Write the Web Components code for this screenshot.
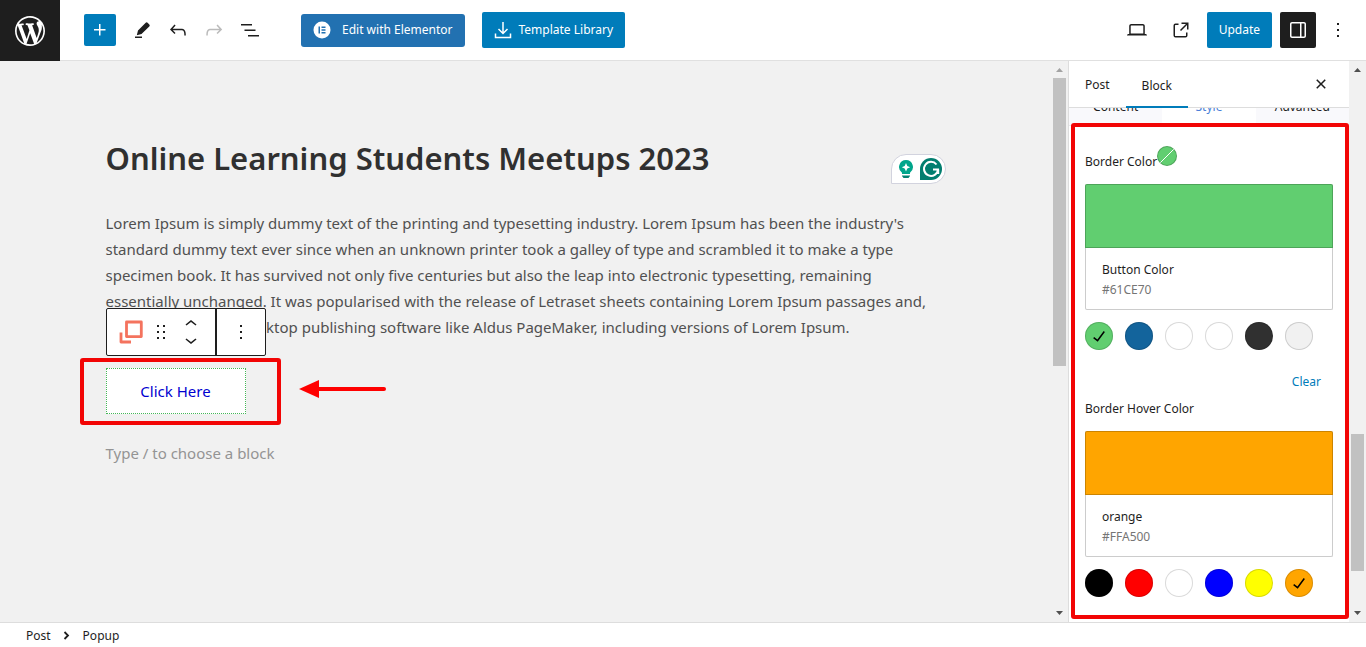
<!DOCTYPE html>
<html lang="en">
<head>
<meta charset="utf-8">
<title>Edit Post</title>
<style>
  html, body {
    margin: 0;
    height: 100%;
  }
  body {
    font-family: "Noto Sans", "Open Sans", sans-serif;
    font-size: 12px;
    line-height: 20px;
    color: #1e1e1e;
    background: #fff;
    --blue: #007cba;
    --line: #ddd;
  }
</style>
</head>
<body>
<post-editor>
  <editor-header slot="header"></editor-header>
  <editor-canvas slot="canvas">
    <span slot="title">Online Learning Students Meetups 2023</span>
    <span slot="text">Lorem Ipsum is simply dummy text of the printing and typesetting industry. Lorem Ipsum has been the industry's<br>standard dummy text ever since when an unknown printer took a galley of type and scrambled it to make a type<br>specimen book. It has survived not only five centuries but also the leap into electronic typesetting, remaining<br>essentially unchanged. It was popularised with the release of Letraset sheets containing Lorem Ipsum passages and,<br>more recently with desktop publishing software like Aldus PageMaker, including versions of Lorem Ipsum.</span>
    <popup-block slot="block">Click Here</popup-block>
  </editor-canvas>
  <settings-sidebar slot="sidebar">
    <color-field label="Border Color" name="Button Color" value="#61CE70" indicator
      colors="#61ce70 #13649c #ffffff #ffffff #303030 #f1f1f1"></color-field>
    <color-field label="Border Hover Color" name="orange" value="#FFA500"
      colors="#000000 #ff0000 #ffffff #0000ff #ffff00 #ffa500"></color-field>
  </settings-sidebar>
  <block-breadcrumb slot="footer"></block-breadcrumb>
</post-editor>

<script>
const icons = {
  wordpress: ['-2 -2 24 24', '<path d="M20 10c0-5.51-4.49-10-10-10C4.48 0 0 4.49 0 10c0 5.52 4.48 10 10 10 5.51 0 10-4.48 10-10zM7.78 15.37L4.37 6.22c.55-.02 1.17-.08 1.17-.08.5-.06.44-1.13-.06-1.11 0 0-1.45.11-2.37.11-.18 0-.37 0-.58-.01C4.12 2.69 6.87 1.11 10 1.11c2.33 0 4.45.87 6.05 2.34-.68-.11-1.65.39-1.65 1.58 0 .74.45 1.36.9 2.1.35.61.55 1.36.55 2.46 0 1.49-1.4 5-1.4 5l-3.03-8.37c.54-.02.82-.17.82-.17.5-.05.44-1.25-.06-1.22 0 0-1.44.12-2.38.12-.87 0-2.33-.12-2.33-.12-.5-.03-.56 1.2-.06 1.22l.92.08 1.26 3.41zM17.41 10c.24-.64.74-1.87.43-4.25.7 1.29 1.05 2.71 1.05 4.25 0 3.29-1.73 6.24-4.4 7.78.97-2.59 1.94-5.2 2.92-7.78zM6.1 18.09C3.12 16.65 1.11 13.53 1.11 10c0-1.3.23-2.48.72-3.59C3.25 10.3 4.67 14.2 6.1 18.09zm4.03-6.63l2.58 6.98c-.86.29-1.76.45-2.71.45-.79 0-1.57-.11-2.29-.33.81-2.38 1.62-4.74 2.42-7.1z"/>'],
  plus: ['0 0 24 24', '<path d="M11 12.5V17.5H12.5V12.5H17.5V11H12.5V6H11V11H6V12.5H11Z"/>'],
  pencil: ['0 0 24 24', '<path d="M19.3 6.5 17.6 4.8a1.3 1.3 0 0 0-1.9 0L8 12.5l-1.2 4.7 4.7-1.2 7.8-7.6a1.3 1.3 0 0 0 0-1.9ZM12 18.5H5V20h7v-1.5Z"/>'],
  undo: ['0 0 24 24', '<path d="M18.3 11.7c-.6-.6-1.4-.9-2.3-.9H6.7l2.9-3.3-1.1-1-4.5 5L8.5 16l1-1-2.7-2.7H16c.5 0 .9.2 1.3.5 1 1 1 3.4 1 4.5v.3h1.5v-.2c0-1.5 0-4.3-1.5-5.7z"/>'],
  redo: ['0 0 24 24', '<path d="M15.6 6.5l-1.1 1 2.9 3.3H8c-.9 0-1.7.3-2.3.9-1.4 1.5-1.4 4.2-1.4 5.6v.2h1.5v-.3c0-1.1 0-3.5 1-4.5.3-.3.7-.5 1.3-.5h9.2L14.5 15l1.1 1.1 4.6-4.6-4.6-5z"/>'],
  list: ['0 0 24 24', '<path d="M3 6h11v1.5H3V6Zm3.5 5.5h11V13h-11v-1.5ZM21 17H10v1.5h11V17Z"/>'],
  laptop: ['0 0 24 24', '<path d="M20.5 16h-.7V8c0-1.1-.9-2-2-2H6.2c-1.1 0-2 .9-2 2v8h-.7c-.8 0-1.5.7-1.5 1.5h20c0-.8-.7-1.5-1.5-1.5zM5.7 8c0-.3.2-.5.5-.5h11.6c.3 0 .5.2.5.5v7.6H5.7V8z"/>'],
  external: ['0 0 24 24', '<path d="M19.5 4.5h-7V6h4.44l-5.97 5.97 1.06 1.06L18 7.06v4.44h1.5v-7Zm-13 1a2 2 0 0 0-2 2v10a2 2 0 0 0 2 2h10a2 2 0 0 0 2-2v-3H17v3a.5.5 0 0 1-.5.5h-10a.5.5 0 0 1-.5-.5v-10a.5.5 0 0 1 .5-.5h3V5.5h-3Z"/>'],
  drawer: ['0 0 24 24', '<path d="M18 4H6c-1.1 0-2 .9-2 2v12c0 1.1.9 2 2 2h12c1.1 0 2-.9 2-2V6c0-1.1-.9-2-2-2zm-4 14.5H6c-.3 0-.5-.2-.5-.5V6c0-.3.2-.5.5-.5h8v13zm4.5-.5c0 .3-.2.5-.5.5h-2.5v-13H18c.3 0 .5.2.5.5v12z"/>'],
  more: ['0 0 24 24', '<path d="M13 19h-2v-2h2v2zm0-6h-2v-2h2v2zm0-6h-2V5h2v2z"/>'],
  drag: ['0 0 24 24', '<path d="M8 7h2V5H8v2zm0 6h2v-2H8v2zm0 6h2v-2H8v2zm6-14v2h2V5h-2zm0 8h2v-2h-2v2zm0 6h2v-2h-2v2z"/>'],
  up: ['0 0 24 24', '<path d="M6.5 12.4L12 8l5.5 4.4-.9 1.2L12 10l-4.5 3.6-1-1.2z"/>'],
  down: ['0 0 24 24', '<path d="M17.5 11.6L12 16l-5.5-4.4.9-1.2L12 14l4.5-3.6 1 1.2z"/>'],
  right: ['0 0 24 24', '<path d="M9.5 8l3.5 3.5L9.5 15" fill="none" stroke="currentColor" stroke-width="1.8"/>'],
  close: ['0 0 24 24', '<path d="M12 13.06l3.712 3.713 1.061-1.06L13.061 12l3.712-3.712-1.06-1.06L12 10.938 8.288 7.227l-1.061 1.06L10.939 12l-3.712 3.712 1.06 1.061L12 13.061z"/>'],
  check: ['0 0 24 24', '<path d="M16.7 7.1l-6.3 8.5-3.3-2.5-.9 1.2 4.5 3.4L17.9 8z"/>'],
  elementor: ['0 0 18 18', '<circle cx="9" cy="9" r="8.5"/><path d="M5.5 5.5h1.5v7H5.5zM8.5 5.5h4V7h-4zM8.5 8.3h4v1.4h-4zM8.5 11h4v1.5h-4z" fill="#2271b1"/>'],
  download: ['0 0 18 18', '<path d="M9 1v11M4.5 8 9 12.5 13.5 8M1.5 12.5v4h15v-4" fill="none" stroke="currentColor" stroke-width="1.5"/>'],
  popup: ['0 0 24 24', '<path d="M7.5 2h14.8v14.6H7.5zM2 12.5V22h10" fill="none" stroke="#f4735e" stroke-width="2.8" stroke-linejoin="round"/>'],
  bulb: ['0 0 16 20', '<path d="M8 1a7 7 0 0 1 4 12.7V15H4v-1.3A7 7 0 0 1 8 1z" fill="#00a58b"/><path d="M8 4 9.3 6.9 12.2 8.2 9.3 9.5 8 12.4 6.7 9.5 3.8 8.2 6.7 6.9z" fill="#fff"/><path d="M4 16.5h8v.5l-1.5 2h-5L4 17z" fill="#028070"/>'],
  grammarly: ['0 0 22 22', '<path d="M0 11a11 11 0 1 1 11 11H0z" fill="#027e6f"/><path d="M16.5 6.5a7 7 0 1 0 1.5 5h-5m5.2 0v4.5" fill="none" stroke="#fff" stroke-width="2"/>'],
};

class UiIcon extends HTMLElement {
  constructor() {
    super();
    this.attachShadow({ mode: 'open' });
    const [viewBox, body] = icons[this.getAttribute('name')];
    this.shadowRoot.innerHTML = `
      <style>
        :host { display: block; flex: none; width: 24px; height: 24px; }
        svg { display: block; width: 100%; height: 100%; fill: currentColor; }
      </style>
      <svg viewBox="${viewBox}" aria-hidden="true">${body}</svg>
    `;
  }
}

class ScrollTrack extends HTMLElement {
  constructor() {
    super();
    this.attachShadow({ mode: 'open' });
    const [before, size, after] = this.getAttribute('parts').split(' ');
    this.shadowRoot.innerHTML = `
      <style>
        :host { display: flex; flex-direction: column; flex: none; width: 17px; background: #f1f1f1; }
        svg { display: block; flex: none; width: 17px; height: 17px; fill: #505050; }
        :host([top]) svg:first-of-type { fill: #a3a3a3; }
        .thumb { flex: ${size} 0 0; margin: 0 2px; background: #c1c1c1; }
      </style>
      <svg viewBox="0 0 17 17"><path d="M5 11h7L8.5 7z"/></svg>
      <div style="flex: ${before} 0 0"></div>
      <div class="thumb"></div>
      <div style="flex: ${after} 0 0"></div>
      <svg viewBox="0 0 17 17"><path d="M5 6h7L8.5 10z"/></svg>
    `;
  }
}

class MarkerBox extends HTMLElement {
  constructor() {
    super();
    this.attachShadow({ mode: 'open' });
    this.shadowRoot.innerHTML = `
      <style>
        :host {
          position: absolute;
          box-sizing: border-box;
          border: 4px solid #f20505;
          border-radius: 3px;
          pointer-events: none;
        }
      </style>
    `;
  }
}

class PostEditor extends HTMLElement {
  constructor() {
    super();
    this.attachShadow({ mode: 'open' });
    this.shadowRoot.innerHTML = `
      <style>
        :host { display: flex; flex-direction: column; height: 100vh; overflow: hidden; }
        main { display: flex; flex: 1; min-height: 0; }
      </style>
      <slot name="header"></slot>
      <main>
        <slot name="canvas"></slot>
        <slot name="sidebar"></slot>
      </main>
      <slot name="footer"></slot>
    `;
  }
}

class EditorHeader extends HTMLElement {
  constructor() {
    super();
    this.attachShadow({ mode: 'open' });
    this.shadowRoot.innerHTML = `
      <style>
        :host {
          display: flex;
          align-items: center;
          flex: none;
          height: 60px;
          border-bottom: 1px solid #e0e0e0;
        }
        button, a {
          display: flex;
          align-items: center;
          justify-content: center;
          padding: 0;
          border: 0;
          border-radius: 2px;
          background: none;
          font: inherit;
          color: inherit;
          text-decoration: none;
          white-space: nowrap;
        }
        .logo {
          width: 60px;
          height: 61px;
          margin-bottom: -1px;
          border-radius: 0;
          background: #1e1e1e;
          color: #fff;
        }
        .logo ui-icon { width: 36px; height: 36px; }
        .tools { display: flex; align-items: center; gap: 12px; margin-left: 24px; }
        .add { width: 32px; height: 32px; margin-right: 2px; background: var(--blue); color: #fff; }
        .off { color: #bbb; }
        .elementor, .library { color: #fff; }
        .elementor {
          gap: 11px;
          height: 33px;
          margin-left: 39px;
          padding: 0 12px;
          border-radius: 3px;
          background: #2271b1;
        }
        .library { gap: 7px; height: 36px; margin-left: 17px; padding: 0 12px; background: var(--blue); }
        .elementor ui-icon, .library ui-icon { width: 18px; height: 18px; }
        .actions { display: flex; align-items: center; gap: 8px; margin-left: auto; padding-right: 16px; }
        .actions .view { margin-right: 12px; }
        .actions .external { margin-right: 6px; }
        .update { height: 36px; padding: 0 12px; background: var(--blue); color: #fff; }
        .settings { width: 36px; height: 36px; margin-right: 2px; background: #1e1e1e; color: #fff; }
      </style>
      <a class="logo" href="#" aria-label="View Posts"><ui-icon name="wordpress"></ui-icon></a>
      <div class="tools">
        <button class="add" aria-label="Add block"><ui-icon name="plus"></ui-icon></button>
        <button aria-label="Tools"><ui-icon name="pencil"></ui-icon></button>
        <button aria-label="Undo"><ui-icon name="undo"></ui-icon></button>
        <button class="off" aria-label="Redo"><ui-icon name="redo"></ui-icon></button>
        <button aria-label="List view"><ui-icon name="list"></ui-icon></button>
      </div>
      <button class="elementor"><ui-icon name="elementor"></ui-icon>Edit with Elementor</button>
      <button class="library"><ui-icon name="download"></ui-icon>Template Library</button>
      <div class="actions">
        <button class="view" aria-label="Preview"><ui-icon name="laptop"></ui-icon></button>
        <a class="external" href="#" aria-label="View Post"><ui-icon name="external"></ui-icon></a>
        <button class="update">Update</button>
        <button class="settings" aria-label="Settings"><ui-icon name="drawer"></ui-icon></button>
        <button aria-label="Options"><ui-icon name="more"></ui-icon></button>
      </div>
    `;
  }
}

class EditorCanvas extends HTMLElement {
  constructor() {
    super();
    this.attachShadow({ mode: 'open' });
    this.shadowRoot.innerHTML = `
      <style>
        :host {
          display: flex;
          flex: 1;
          min-width: 0;
          background: #f1f1f1;
          font-family: "Noto Sans", "Open Sans", sans-serif;
          font-size: 15px;
          line-height: 26px;
          color: #505050;
        }
        .page { flex: 1; min-width: 0; overflow: hidden; }
        article { position: relative; max-width: 840px; margin: 0 auto; padding-top: 77px; }
        h1 { margin: 0; font-size: 31px; font-weight: 600; line-height: 40px; color: #303030; }
        p { margin: 32px 0 28px; white-space: nowrap; }
        .hint { margin: 26px 0 0; color: #949494; }
        .badge {
          position: absolute;
          top: 93px;
          right: 0;
          display: flex;
          align-items: center;
          gap: 6px;
          box-sizing: border-box;
          height: 30px;
          padding: 0 3px 0 6px;
          border: 1px solid #d2d3de;
          border-radius: 15px 15px 15px 0;
          background: #fff;
        }
        .badge ui-icon { width: 22px; height: 22px; }
        .badge ui-icon:first-child { width: 16px; height: 20px; }
      </style>
      <div class="page">
        <article>
          <h1><slot name="title"></slot></h1>
          <p><slot name="text"></slot></p>
          <slot name="block"></slot>
          <p class="hint">Type / to choose a block</p>
          <div class="badge">
            <ui-icon name="bulb"></ui-icon>
            <ui-icon name="grammarly"></ui-icon>
          </div>
        </article>
      </div>
      <scroll-track top parts="0 288 239"></scroll-track>
    `;
  }
}

class PopupBlock extends HTMLElement {
  constructor() {
    super();
    this.attachShadow({ mode: 'open' });
    this.shadowRoot.innerHTML = `
      <style>
        :host { display: block; position: relative; width: 140px; }
        .trigger {
          display: block;
          width: 100%;
          height: 46px;
          padding: 0;
          border: 1px dotted #45b858;
          background: #fff;
          font: inherit;
          color: #0000d0;
        }
        block-toolbar { position: absolute; left: 0; bottom: 58px; }
        marker-box { inset: -10px -35px -11px -26px; }
        .arrow { position: absolute; left: 193px; top: 12px; width: 88px; height: 18px; }
      </style>
      <button class="trigger"><slot></slot></button>
      <block-toolbar></block-toolbar>
      <marker-box></marker-box>
      <svg class="arrow" viewBox="0 0 88 18">
        <path d="M0 9 20 0v18z" fill="#f00"/>
        <path d="M18 9h67" stroke="#f00" stroke-width="4" stroke-linecap="round"/>
      </svg>
    `;
  }
}

class BlockToolbar extends HTMLElement {
  constructor() {
    super();
    this.attachShadow({ mode: 'open' });
    this.shadowRoot.innerHTML = `
      <style>
        :host {
          display: flex;
          box-sizing: border-box;
          height: 48px;
          border: 1px solid #1e1e1e;
          border-radius: 2px;
          background: #fff;
          color: #1e1e1e;
        }
        .group { display: flex; align-items: center; padding: 0 12px; }
        .group + .group { border-left: 2px solid #1e1e1e; }
        button { display: flex; padding: 0; border: 0; background: none; color: inherit; }
        .drag { margin: 0 6px; }
        .move { display: flex; flex-direction: column; }
        .move button { height: 16px; align-items: center; overflow: hidden; }
      </style>
      <div class="group">
        <button aria-label="Popup"><ui-icon name="popup"></ui-icon></button>
        <button class="drag" aria-label="Drag"><ui-icon name="drag"></ui-icon></button>
        <div class="move">
          <button aria-label="Move up"><ui-icon name="up"></ui-icon></button>
          <button aria-label="Move down"><ui-icon name="down"></ui-icon></button>
        </div>
      </div>
      <div class="group">
        <button aria-label="Options"><ui-icon name="more"></ui-icon></button>
      </div>
    `;
  }
}

class SettingsSidebar extends HTMLElement {
  constructor() {
    super();
    this.attachShadow({ mode: 'open' });
    this.shadowRoot.innerHTML = `
      <style>
        :host { display: flex; flex: none; border-left: 1px solid var(--line); }
        .panel { position: relative; display: flex; flex-direction: column; width: 280px; }
        button { padding: 0; border: 0; background: none; font: inherit; color: inherit; }
        header {
          z-index: 1;
          display: flex;
          flex: none;
          height: 46px;
          border-bottom: 1px solid var(--line);
          background: #fff;
        }
        header button { padding: 2px 16px 0; }
        header .active { margin-bottom: -1px; border-bottom: 2px solid var(--blue); padding-top: 4px; }
        header .close { margin-left: auto; padding-top: 0; }
        .scroll { flex: 1; min-height: 0; overflow: hidden; }
        .tabs { display: grid; grid-template-columns: repeat(3, 1fr); height: 36px; margin-top: -19px; border-bottom: 1px solid #e8e8ec; }
        .tabs button { background: #f9f9fc; }
        .tabs .active { background: #fff; color: #4a80d8; }
        .fields { display: flex; flex-direction: column; padding: 25px 16px; }
        .clear { align-self: flex-end; margin: 22px 12px 6px; color: var(--blue); }
        marker-box { inset: 62px 0 3px 2px; z-index: 2; }
      </style>
      <div class="panel">
        <header>
          <button>Post</button>
          <button class="active">Block</button>
          <button class="close" aria-label="Close"><ui-icon name="close"></ui-icon></button>
        </header>
        <div class="scroll">
          <div class="tabs">
            <button>Content</button>
            <button class="active">Style</button>
            <button>Advanced</button>
          </div>
          <div class="fields">
            <slot name="first"></slot>
            <button class="clear">Clear</button>
            <slot></slot>
          </div>
        </div>
        <marker-box></marker-box>
      </div>
      <scroll-track parts="356 137 34"></scroll-track>
    `;
    this.firstElementChild.slot = 'first';
  }
}

class ColorField extends HTMLElement {
  constructor() {
    super();
    this.attachShadow({ mode: 'open' });
    const value = this.getAttribute('value');
    const swatches = this.getAttribute('colors').split(' ').map((color) => `
      <button class="swatch" style="background: ${color}" aria-label="${color}">
        ${color === value.toLowerCase() ? '<ui-icon name="check"></ui-icon>' : ''}
      </button>`).join('');
    this.shadowRoot.innerHTML = `
      <style>
        :host { display: block; }
        .label { display: flex; height: 20px; padding-top: 1px; }
        .indicator {
          box-sizing: border-box;
          width: 20px;
          height: 20px;
          margin-top: -6px;
          border: 1px solid rgba(0, 0, 0, .2);
          border-radius: 50%;
          background: linear-gradient(-45deg, transparent 48%, #fff 48%, #fff 52%, transparent 52%) ${value};
        }
        .preview {
          display: block;
          box-sizing: border-box;
          width: 100%;
          height: 126px;
          margin: 12px 0;
          padding: 0;
          border: 1px solid #ccc;
          border-top: 0;
          border-radius: 2px;
          background: #fff;
          font: inherit;
          color: inherit;
          text-align: left;
        }
        .color {
          display: block;
          box-sizing: border-box;
          height: 64px;
          margin: 0 -1px;
          border: 1px solid rgba(0, 0, 0, .2);
          border-radius: 2px 2px 0 0;
          background: ${value};
        }
        .info { display: flex; flex-direction: column; height: 61px; box-sizing: border-box; padding: 12px 16px 9px; }
        .value { color: #757575; }
        .swatches { display: flex; gap: 12px; }
        .swatch {
          display: flex;
          align-items: center;
          justify-content: center;
          width: 28px;
          height: 28px;
          padding: 0;
          border: 0;
          border-radius: 50%;
          box-shadow: inset 0 0 0 1px rgba(0, 0, 0, .15);
          color: #000;
        }
      </style>
      <div class="label">${this.getAttribute('label')}${this.hasAttribute('indicator') ? '<span class="indicator"></span>' : ''}</div>
      <button class="preview">
        <span class="color"></span>
        <span class="info">
          <span>${this.getAttribute('name')}</span>
          <span class="value">${value}</span>
        </span>
      </button>
      <div class="swatches">${swatches}</div>
    `;
  }
}

class BlockBreadcrumb extends HTMLElement {
  constructor() {
    super();
    this.attachShadow({ mode: 'open' });
    this.shadowRoot.innerHTML = `
      <style>
        :host {
          display: flex;
          align-items: center;
          gap: 4px;
          flex: none;
          box-sizing: border-box;
          height: 25px;
          padding: 2px 0 0 26px;
          border-top: 1px solid var(--line);
        }
        button { padding: 0; border: 0; background: none; font: inherit; color: inherit; }
      </style>
      <button>Post</button>
      <ui-icon name="right"></ui-icon>
      <span>Popup</span>
    `;
  }
}

customElements.define('ui-icon', UiIcon);
customElements.define('scroll-track', ScrollTrack);
customElements.define('marker-box', MarkerBox);
customElements.define('post-editor', PostEditor);
customElements.define('editor-header', EditorHeader);
customElements.define('editor-canvas', EditorCanvas);
customElements.define('block-toolbar', BlockToolbar);
customElements.define('popup-block', PopupBlock);
customElements.define('color-field', ColorField);
customElements.define('settings-sidebar', SettingsSidebar);
customElements.define('block-breadcrumb', BlockBreadcrumb);
</script>
</body>
</html>
